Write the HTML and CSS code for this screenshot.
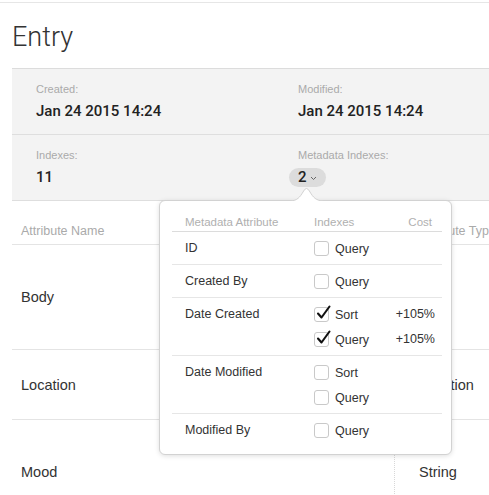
FILE: index.html
```html
<!DOCTYPE html>
<html>
<head>
<meta charset="utf-8">
<link rel="stylesheet" href="styles.css">
</head>
<body>
<div class="page">
  <h1 class="title">Entry</h1>
  <div class="panel">
    <div class="panel-row">
      <div class="field">
        <div class="label">Created:</div>
        <div class="value">Jan 24 2015 14:24</div>
      </div>
      <div class="field">
        <div class="label">Modified:</div>
        <div class="value">Jan 24 2015 14:24</div>
      </div>
    </div>
    <div class="panel-row">
      <div class="field">
        <div class="label">Indexes:</div>
        <div class="value">11</div>
      </div>
      <div class="field">
        <div class="label">Metadata Indexes:</div>
        <div class="value"><span class="badge">2<svg class="chev" width="7" height="5" viewBox="0 0 7 5"><path d="M1 1 L3.5 3.5 L6 1" fill="none" stroke="#666" stroke-width="1"/></svg></span></div>
      </div>
    </div>
  </div>
  <div class="table">
    <div class="trow thead">
      <div class="cell name">Attribute Name</div>
      <div class="cell type">Attribute Type</div>
    </div>
    <div class="trow tall">
      <div class="cell name">Body</div>
      <div class="cell type">Text</div>
    </div>
    <div class="trow mid">
      <div class="cell name">Location</div>
      <div class="cell type">Location</div>
    </div>
    <div class="trow tall">
      <div class="cell name">Mood</div>
      <div class="cell type">String</div>
    </div>
  </div>
</div>

<div class="popover">
  <svg class="arrow" width="34" height="17" viewBox="0 0 34 17"><path d="M0 17 C7 17 10 13 13 8 Q16.5 1 20 8 C23 13 26 17 34 17" fill="#fff" stroke="#d2d2d2" stroke-width="1"/></svg>
  <div class="prow phead">
    <div>Metadata Attribute</div>
    <div>Indexes</div>
    <div class="cost">Cost</div>
  </div>
  <div class="prow">
    <div class="pname">ID</div>
    <div class="opts">
      <div class="opt"><span class="box"></span>Query</div>
    </div>
    <div class="costs"><div class="c"></div></div>
  </div>
  <div class="prow">
    <div class="pname">Created By</div>
    <div class="opts">
      <div class="opt"><span class="box"></span>Query</div>
    </div>
    <div class="costs"><div class="c"></div></div>
  </div>
  <div class="prow">
    <div class="pname">Date Created</div>
    <div class="opts">
      <div class="opt"><span class="box checked"><svg width="17" height="17" viewBox="0 0 17 17"><path d="M3 8.5 L6.5 12.5 L14.5 1.5" fill="none" stroke="#111" stroke-width="2.1" stroke-linecap="round" stroke-linejoin="round"/></svg></span>Sort</div>
      <div class="opt"><span class="box checked"><svg width="17" height="17" viewBox="0 0 17 17"><path d="M3 8.5 L6.5 12.5 L14.5 1.5" fill="none" stroke="#111" stroke-width="2.1" stroke-linecap="round" stroke-linejoin="round"/></svg></span>Query</div>
    </div>
    <div class="costs"><div class="c">+105%</div><div class="c">+105%</div></div>
  </div>
  <div class="prow">
    <div class="pname">Date Modified</div>
    <div class="opts">
      <div class="opt"><span class="box"></span>Sort</div>
      <div class="opt"><span class="box"></span>Query</div>
    </div>
    <div class="costs"><div class="c"></div><div class="c"></div></div>
  </div>
  <div class="prow">
    <div class="pname">Modified By</div>
    <div class="opts">
      <div class="opt"><span class="box"></span>Query</div>
    </div>
    <div class="costs"><div class="c"></div></div>
  </div>
</div>
</body>
</html>
```

FILE: styles.css
```css
html, body {
  margin: 0;
  padding: 0;
  background: #fff;
}
body {
  padding-top: 2px;
  font-family: "Liberation Sans", Arial, sans-serif;
  color: #222;
  width: 489px;
  height: 495px;
  box-sizing: border-box;
  overflow: hidden;
  position: relative;
}
.page {
  border-top: 1px solid #e6e6e6;
  padding-left: 12px;
}
.title {
  margin: 18px 0 15px 0;
  font-family: Roboto, "Liberation Sans", sans-serif;
  font-weight: 300;
  font-size: 27px;
  line-height: 32px;
  color: #333;
}
.panel {
  background: #f3f3f3;
  border-top: 1px solid #dcdcdc;
}
.panel-row {
  display: grid;
  grid-template-columns: 262px 1fr;
  height: 65px;
  border-bottom: 1px solid #dedede;
  padding-left: 24px;
  box-sizing: content-box;
}
.field {
  padding-top: 13px;
}
.label {
  font-size: 11px;
  line-height: 14px;
  color: #aaa;
}
.value {
  margin-top: 5px;
  font-family: Roboto, "Liberation Sans", sans-serif;
  font-weight: 500;
  font-size: 15px;
  line-height: 20px;
  color: #222;
  height: 20px;
  display: flex;
  align-items: center;
}
.badge {
  display: inline-flex;
  align-items: center;
  gap: 3px;
  height: 19px;
  margin-left: -9px;
  padding: 0 9px;
  border-radius: 10px;
  background: #dcdcdc;
}
.chev {
  margin-top: 2px;
}
.table {
  font-size: 14.5px;
  color: #333;
}
.trow {
  display: grid;
  grid-template-columns: 382px 1fr;
  border-bottom: 1px solid #e4e4e4;
}
.thead {
  height: 43px;
  font-size: 12.5px;
  color: #aaa;
}
.thead .cell {
  padding-top: 22px;
  line-height: 16px;
}
.tall {
  height: 104px;
}
.mid {
  height: 69px;
}
.cell {
  display: flex;
  align-items: center;
  white-space: nowrap;
}
.thead .cell {
  align-items: flex-start;
}
.name {
  padding-left: 9px;
}
.type {
  padding-left: 24px;
  border-left: 1px dotted #d8d8d8;
}
.thead .type {
  border-left: none;
  margin-left: 1px;
}

.popover {
  position: absolute;
  left: 159px;
  top: 200px;
  width: 293px;
  box-sizing: border-box;
  background: #fff;
  border: 1px solid #d2d2d2;
  border-radius: 6px;
  box-shadow: 0 1px 5px rgba(0, 0, 0, 0.13);
  padding: 12px 9px 8px 12px;
  font-size: 12.5px;
  color: #333;
}
.arrow {
  position: absolute;
  top: -17px;
  left: 130px;
}
.prow {
  display: grid;
  grid-template-columns: 129px 1fr 60px;
  padding: 4px 7px 3px 13px;
  border-top: 1px solid #e6e6e6;
}
.phead {
  border-top: none;
  border-bottom: 1px solid #dcdcdc;
  padding: 0 10px 0 13px;
  height: 18px;
  font-size: 11.5px;
  line-height: 18px;
  color: #b0b0b0;
}
.phead + .prow {
  border-top: none;
}
.cost {
  text-align: right;
}
.pname {
  line-height: 25px;
}
.opt {
  height: 25px;
  display: flex;
  align-items: center;
  gap: 6px;
}
.box {
  position: relative;
  width: 13px;
  height: 13px;
  border: 1px solid #c9c9c9;
  border-radius: 3px;
  background: #fff;
}
.box svg {
  position: absolute;
  left: 0px;
  top: -3px;
}
.c {
  height: 25px;
  line-height: 25px;
  text-align: right;
}
```
